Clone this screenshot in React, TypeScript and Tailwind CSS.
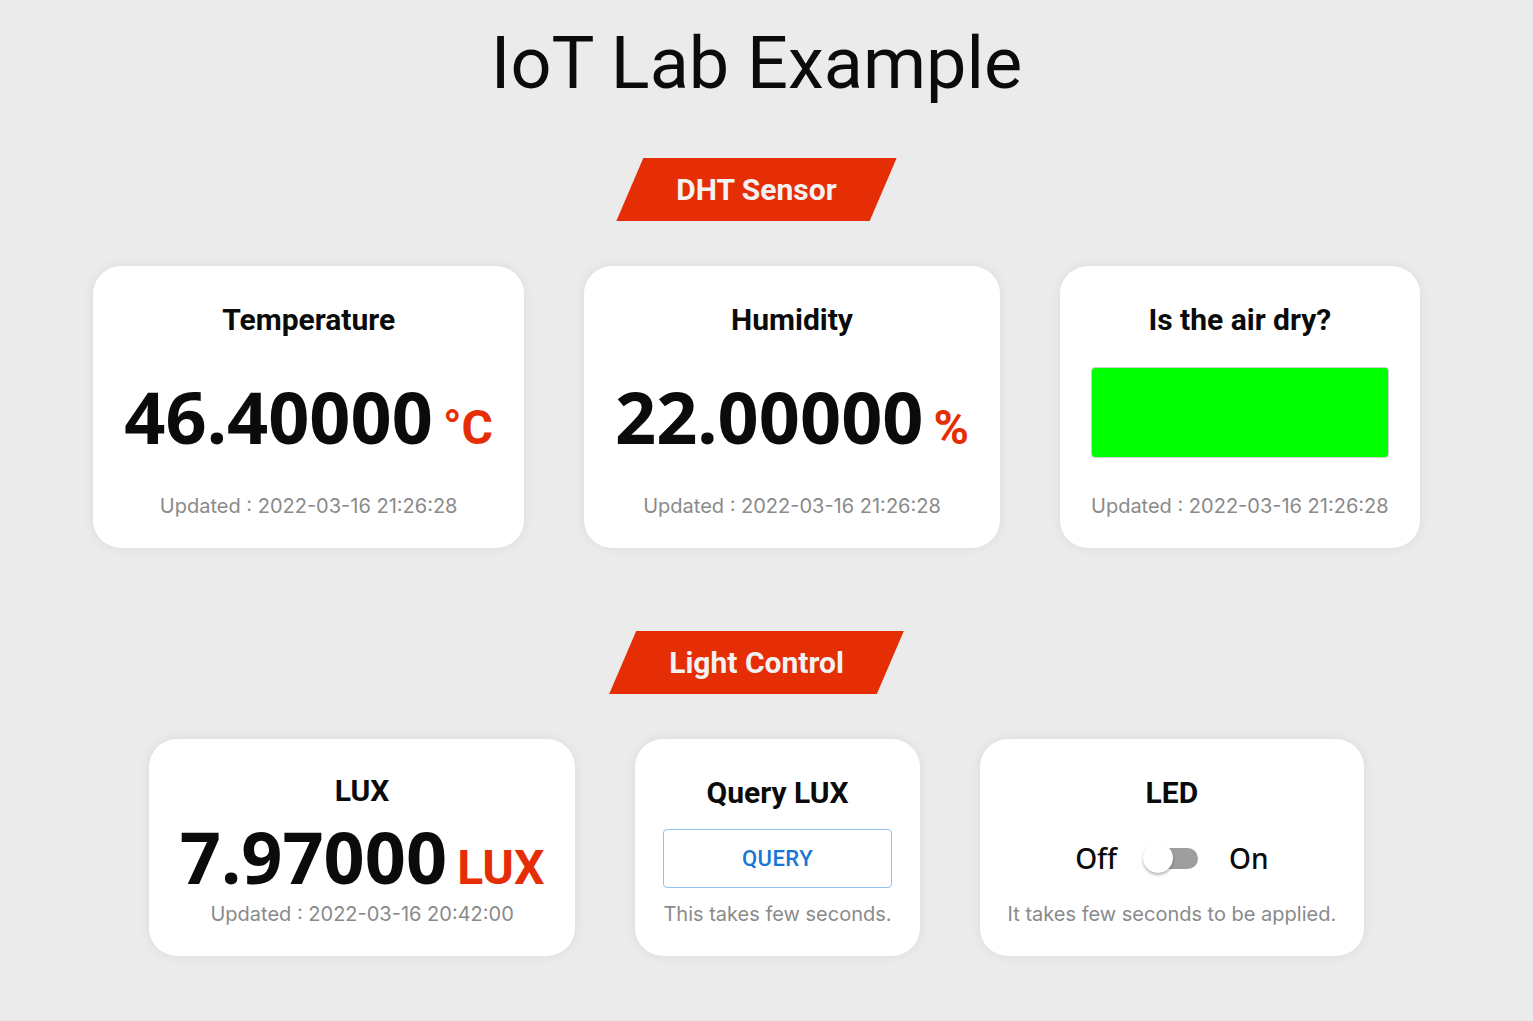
import React from 'react';

const RED = 'text-[#e52e06]';

function Banner({ label }: { label: string }) {
  return (
    <div className="flex h-[63px] items-center bg-[#e52e06] px-[60px] [clip-path:polygon(27px_0,100%_0,calc(100%-27px)_100%,0_100%)]">
      <span className="font-['Roboto'] text-[30px] font-bold leading-none text-[#f2f2f2]">{label}</span>
    </div>
  );
}

function Card({ children, pad = 'px-[31px] pt-[36px]' }: { children: React.ReactNode; pad?: string }) {
  return (
    <div className={`flex flex-col items-center rounded-[28px] bg-white pb-[30px] shadow-[0_0_12px_rgba(0,0,0,0.07)] ${pad}`}>
      {children}
    </div>
  );
}

function Title({ children }: { children: React.ReactNode }) {
  return <h3 className="font-['Roboto'] text-[30px] font-bold leading-[36px] text-[#0b0b0b]">{children}</h3>;
}

function Updated({ children, className = '' }: { children: React.ReactNode; className?: string }) {
  return (
    <p className={`font-['Inter'] text-[20px] font-normal leading-[24px] text-[#8a8a8a] ${className}`}>{children}</p>
  );
}

function Reading({ value, unit, className = '' }: { value: string; unit: string; className?: string }) {
  return (
    <div className={`flex items-baseline gap-[10px] ${className}`}>
      <span className="font-['Noto_Sans'] text-[72px] font-bold leading-[76px] text-[#0b0b0b]">{value}</span>
      <span className={`font-['Roboto'] text-[48px] font-bold leading-none ${RED}`}>{unit}</span>
    </div>
  );
}

export default function App() {
  return (
    <div className="min-h-screen bg-[#ebebeb]">
      <div className="flex w-[1513px] flex-col items-center pt-[27px]">
        <h1 className="font-['Roboto'] text-[72px] font-normal leading-[74px] text-[#0b0b0b]">IoT Lab Example</h1>

        <div className="mt-[57px]">
          <Banner label="DHT Sensor" />
        </div>

        <div className="mt-[45px] flex items-start gap-[60px]">
          <Card>
            <Title>Temperature</Title>
            <Reading value="46.40000" unit="°C" className="mt-[40px]" />
            <Updated className="mt-[40px]">Updated : 2022-03-16 21:26:28</Updated>
          </Card>
          <Card>
            <Title>Humidity</Title>
            <Reading value="22.00000" unit="%" className="mt-[40px]" />
            <Updated className="mt-[40px]">Updated : 2022-03-16 21:26:28</Updated>
          </Card>
          <Card>
            <Title>Is the air dry?</Title>
            <div className="mt-[29px] h-[91px] w-full rounded-[4px] border border-[#d0d0d0] bg-[#00ff00]" />
            <Updated className="mt-[36px]">Updated : 2022-03-16 21:26:28</Updated>
          </Card>
        </div>

        <div className="mt-[83px]">
          <Banner label="Light Control" />
        </div>

        <div className="mt-[45px] flex items-start gap-[60px]">
          <Card pad="px-[31px] pt-[34px]">
            <Title>LUX</Title>
            <Reading value="7.97000" unit="LUX" className="mt-[9px]" />
            <Updated className="mt-[8px]">Updated : 2022-03-16 20:42:00</Updated>
          </Card>
          <Card pad="px-[28px] pt-[36px]">
            <Title>Query LUX</Title>
            <button className="mt-[18px] h-[59px] w-full rounded-[4px] border border-[#90c2f0] font-['Roboto'] text-[22px] font-medium tracking-[0.5px] text-[#1976d2]">
              QUERY
            </button>
            <Updated className="mt-[14px]">This takes few seconds.</Updated>
          </Card>
          <Card pad="px-[28px] pt-[36px]">
            <Title>LED</Title>
            <div className="mt-[32px] flex h-[30px] items-center font-['Noto_Sans'] text-[28px] font-medium text-[#0b0b0b]">
              <span>Off</span>
              <div className="relative ml-[26px] mr-[31px] h-[30px] w-[55px]">
                <div className="absolute left-[10px] right-0 top-[5px] h-[21px] rounded-full bg-[#9e9e9e]" />
                <div className="absolute left-0 top-0 h-[30px] w-[30px] rounded-full bg-white shadow-[0_2px_3px_rgba(0,0,0,0.3)]" />
              </div>
              <span>On</span>
            </div>
            <Updated className="mt-[29px]">It takes few seconds to be applied.</Updated>
          </Card>
        </div>
      </div>
    </div>
  );
}
